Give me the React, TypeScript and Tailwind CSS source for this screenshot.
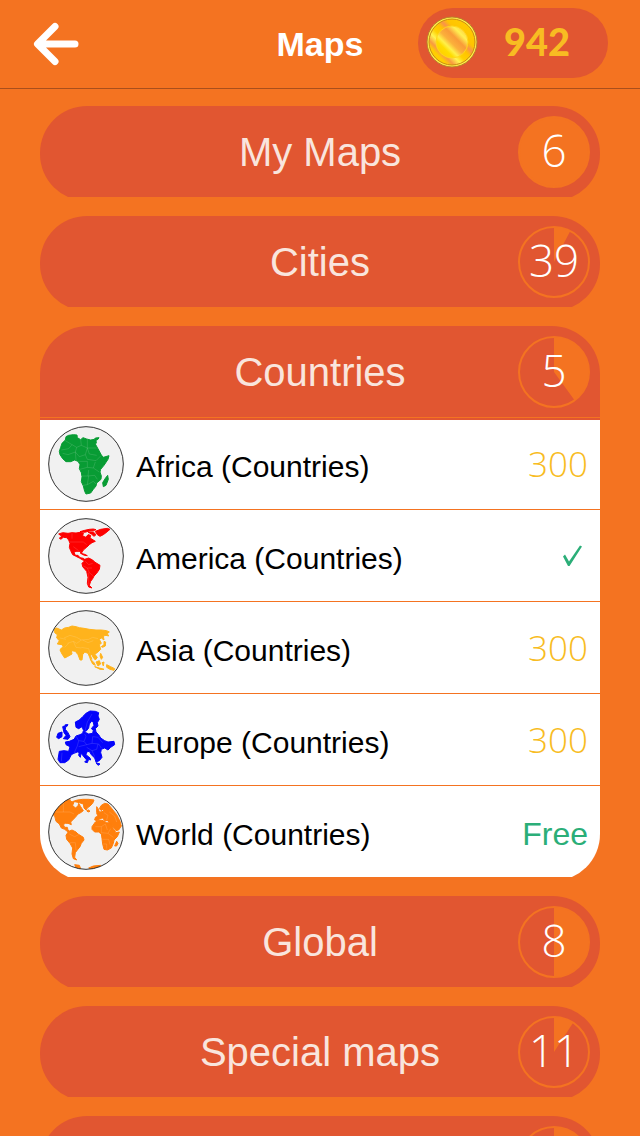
import type { ReactNode } from 'react'
import clsx from 'clsx'

type MapId = 'africa' | 'america' | 'asia' | 'europe' | 'world'

interface MapItem {
  id: MapId
  name: string
  price?: number
  owned?: boolean
}

interface Category {
  id: string
  title?: string
  count?: number
  progress: number
  maps?: MapItem[]
}

const CATEGORIES: Category[] = [
  { id: 'mine', title: 'My Maps', count: 6, progress: 1 },
  { id: 'cities', title: 'Cities', count: 39, progress: 0.077 },
  {
    id: 'countries',
    title: 'Countries',
    count: 5,
    progress: 0.4,
    maps: [
      { id: 'africa', name: 'Africa (Countries)', price: 300 },
      { id: 'america', name: 'America (Countries)', owned: true },
      { id: 'asia', name: 'Asia (Countries)', price: 300 },
      { id: 'europe', name: 'Europe (Countries)', price: 300 },
      { id: 'world', name: 'World (Countries)', price: 0 },
    ],
  },
  { id: 'global', title: 'Global', count: 8, progress: 0.5 },
  { id: 'special', title: 'Special maps', count: 11, progress: 0.092 },
  { id: 'more', progress: 0.5 },
]

const THUMBS: Record<MapId, { color: string; land: string; borders: string }> = {
  africa: {
    color: '#089c34',
    land: 'M54 32 62 28 76 26 87 27 88 35 98 41 105 35 116 39 128 42 139 40 142 36 153 35 150 40 144 43 145 51 142 54 152 72 160 87 166 94 183 89 180 100 168 118 158 130 156 138 160 150 159 160 146 171 144 180 136 190 128 201 114 204 110 196 106 180 100 167 102 152 100 140 94 128 96 116 90 106 80 102 68 107 54 107 44 98 36 86 34 76 38 64 42 52 52 42Z M179 148 181 160 174 178 166 182 164 170 172 157Z',
    borders: 'M52 44 72 56 86 64 100 58 98 41 M72 56 62 68 40 72 M86 64 82 78 60 86 44 82 M82 78 84 102 M100 58 118 66 112 86 94 92 82 78 M118 40V66L146 66 M118 66 124 84 146 88 M112 86 118 100 144 104 158 90 M94 106 118 106V124L96 130 M118 124 136 126 142 108 M136 126 154 138 M102 150 120 150 122 132 M120 150 140 148 148 160 M122 150 118 176 104 178 M118 176 136 166 144 174',
  },
  america: {
    color: '#fd0000',
    land: 'M32 48 44 44 60 46 72 44 84 45 96 43 106 45 104 54 114 58 120 50 128 52 126 60 136 66 142 70 132 74 124 80 116 88 108 94 102 102 100 108 96 100 84 100 78 103 82 112 90 112 96 119 106 121 112 126 106 127 94 120 82 114 74 110 68 98 64 88 66 76 62 66 56 59 46 58 38 64 34 60 42 55Z M142 40 158 34 178 31 186 34 174 44 166 50 156 55 148 50Z M96 41 110 37 124 34 136 33 144 35 136 38 124 39 110 43Z M120 42 136 42 144 50 138 55 130 48Z M98 106 110 109 118 113 109 112Z M110 124 122 120 134 126 140 132 156 142 154 154 146 166 138 174 134 182 128 190 124 202 132 210 122 207 118 196 120 178 116 160 104 146 102 136 108 130Z',
    borders: 'M66 72H106L116 80 M72 46V62 M112 130 122 140 134 136 M106 144 118 150 124 164 136 174 M118 150 132 150 M122 164 122 200 M76 86 92 98',
  },
  asia: {
    color: '#ffb31c',
    land: 'M20 56 26 54 40 60 50 54 62 52 72 48 84 50 94 53 108 55 124 58 144 60 160 60 176 62 184 66 178 71 182 78 174 76 166 78 168 90 160 84 154 88 160 100 154 104 158 118 148 128 140 132 148 142 142 150 134 140 132 134 126 134 132 148 126 144 120 130 110 126 104 134 102 150 96 150 90 134 82 124 70 122 72 132 58 140 50 144 42 132 36 120 40 114 46 112 42 104 28 102 34 92 26 84 28 74 20 68Z M168 94 173 96 172 108 164 112 160 110 168 104Z M126 146 138 158 142 166 134 162Z M144 156 154 152 158 162 150 168Z M162 158 168 156 166 168Z M158 130 164 142 160 148 156 138Z M176 164 188 170 200 176 198 181 186 178 176 172Z M140 170 154 174 168 178 156 178Z',
    borders: 'M48 84 66 76 86 82 100 90 122 88 134 82 150 86 M58 100 76 94 86 100 100 90 M76 94 84 112 100 114 M100 112 122 116 126 130 M50 112 62 100 M104 90 120 98 136 92 M36 84 54 88',
  },
  europe: {
    color: '#0404fb',
    land: 'M82 60 94 54 104 44 114 34 126 27 142 28 152 32 150 42 154 52 148 62 150 72 142 80 144 90 152 98 158 108 170 116 180 120 198 118 200 128 188 136 180 144 170 138 160 142 158 152 162 166 154 176 144 180 140 168 130 158 124 148 116 150 114 158 126 168 128 174 122 172 118 182 110 180 116 174 104 160 98 152 88 150 78 154 70 158 62 174 50 182 36 182 30 172 34 148 48 146 62 148 66 134 54 128 52 120 64 118 78 112 84 102 96 98 104 94 106 86 114 92 122 96 134 94 136 84 130 80 138 70 136 62 132 56 124 66 122 78 114 88 106 84 102 74 92 80 84 76Z M44 74 54 70 52 82 60 92 66 104 60 112 46 110 54 100 48 92Z M30 94 42 90 42 104 32 110 26 106Z M94 150 99 154 97 166 92 160Z M144 182 156 186 150 190Z M52 68 60 68 56 74Z',
    borders: 'M84 102 92 116 88 132 78 154 M92 116 108 118 114 104 110 96 M108 118 116 128 132 124 134 104 M92 134 116 128 M132 124 152 126 160 138 M134 104 152 106 M116 136 132 146 146 142 150 126 M132 146 140 164 M42 152 40 178 M112 84 118 60 132 36 M152 108 164 122',
  },
  world: {
    color: '#ff7f0c',
    land: 'M10 40 24 26 40 18 54 26 66 22 78 24 74 34 82 42 90 36 92 28 98 38 106 50 98 56 90 60 82 70 74 78 68 84 70 92 60 88 52 88 46 92 50 100 58 100 60 108 66 114 60 114 50 106 40 102 34 90 24 82 20 66 10 58Z M76 22 88 18 104 16 122 16 138 18 134 28 126 36 118 42 114 48 108 42 106 30 94 26Z M44 20 56 16 68 18 62 24 48 24Z M62 112 72 108 84 114 90 120 106 130 108 138 100 148 96 158 88 168 82 176 80 190 86 198 76 194 72 180 74 162 66 148 56 136 54 124Z M116 50 122 48 126 52 120 54Z M146 38 150 44 154 54 146 56Z M154 44 160 34 170 28 180 30 190 42 206 62 216 82 220 96 212 108 204 110 192 94 184 88 180 80 170 80 164 72 156 74 148 80 140 78 142 70 150 66 146 58 156 54 166 52 166 44 160 50Z M142 84 156 78 166 80 176 86 190 88 196 104 204 116 214 114 208 128 198 138 196 148 190 162 178 168 168 166 164 150 162 134 160 120 152 114 140 114 132 106 132 98Z M206 142 210 148 206 156 200 156Z M80 212 94 214 98 224 86 224Z M122 222 136 216 158 214 154 222 134 228Z',
    borders: 'M22 54H66L78 60 M46 24V54 M64 120 80 128 92 122 M66 146 82 146 84 168 M142 98 160 98 172 90 M160 98V116L180 118 188 104 M164 136 182 136 186 152 M180 118 196 130 M172 90 178 108 M168 56 180 64 176 78 M184 54 200 66 206 84 M164 150H176V164',
  },
}

function Thumb({ id }: { id: MapId }) {
  const { color, land, borders } = THUMBS[id]
  return (
    <svg className="size-[76px] shrink-0" viewBox="0 0 228 228" aria-hidden="true">
      <clipPath id={`clip-${id}`}>
        <circle cx="114" cy="114" r="112" />
      </clipPath>
      <circle cx="114" cy="114" r="112" fill="#f1f1f1" />
      <g clipPath={`url(#clip-${id})`}>
        <path d={land} fill={color} stroke={color} strokeWidth="3" strokeLinejoin="round" />
        <path d={borders} fill="none" stroke="#fff" strokeOpacity=".2" strokeWidth="2" />
      </g>
      <circle cx="114" cy="114" r="112" fill="none" stroke="#333" strokeWidth="3" />
    </svg>
  )
}

function Pie({ value }: { value: number }) {
  const a = value * Math.PI * 2
  const x = 36 + 35 * Math.sin(a)
  const y = 36 - 35 * Math.cos(a)
  return (
    <svg className="col-start-1 row-start-1 size-[72px]" viewBox="0 0 72 72" aria-hidden="true">
      <circle cx="36" cy="36" r="35" fill={value >= 1 ? '#f47321' : 'none'} stroke="#f47321" strokeWidth="2" />
      {value < 1 && <path d={`M36 36V1A35 35 0 ${value > 0.5 ? 1 : 0} 1 ${x} ${y}Z`} fill="#f47321" />}
    </svg>
  )
}

function Coin() {
  return (
    <svg className="mb-0.5 size-[52px]" viewBox="0 0 52 52" aria-hidden="true">
      <defs>
        <linearGradient id="rim" x1="0" y1="1" x2="1" y2="0">
          <stop offset="0" stopColor="#ffc800" />
          <stop offset=".2" stopColor="#ffcf00" />
          <stop offset=".27" stopColor="#f99a40" />
          <stop offset=".36" stopColor="#fff450" />
          <stop offset=".44" stopColor="#ffd000" />
          <stop offset=".54" stopColor="#ffc400" />
          <stop offset=".61" stopColor="#f9934a" />
          <stop offset=".68" stopColor="#ffc400" />
          <stop offset="1" stopColor="#ffd000" />
        </linearGradient>
        <linearGradient id="face" x1="0" y1="1" x2="1" y2="0">
          <stop offset="0" stopColor="#ffc400" />
          <stop offset=".28" stopColor="#ffdc00" />
          <stop offset=".37" stopColor="#fff04a" />
          <stop offset=".48" stopColor="#fbb03b" />
          <stop offset=".62" stopColor="#f99b38" />
          <stop offset=".76" stopColor="#fff052" />
          <stop offset="1" stopColor="#ffb52e" />
        </linearGradient>
      </defs>
      <circle cx="26" cy="26" r="25" fill="#fff04a" stroke="#b9822a" />
      <circle cx="26" cy="26" r="23" fill="url(#rim)" stroke="#c98a12" />
      <circle cx="26" cy="26" r="16" fill="url(#face)" stroke="#ffd51e" />
    </svg>
  )
}

function Price({ item }: { item: MapItem }) {
  if (item.owned) {
    return (
      <svg className="mr-1 size-6" viewBox="0 0 24 24" role="img" aria-label="Owned">
        <path d="M3 12.500 5 10.500 9 17.500 20 1.500 22 2.500 9.500 22H8Z" fill="#2bae78" />
      </svg>
    )
  }
  if (item.price === 0) return <span className="pt-1 text-[32px] leading-10 text-[#2bae78]">Free</span>
  return <span className="font-['Open_Sans',sans-serif] text-[35px] leading-10 font-light text-[#f8bc22]">{item.price}</span>
}

function CategoryHeader({ category, open }: { category: Category; open: boolean }) {
  const { title, count, progress } = category
  return (
    // The pill runs 4px past its box, so the lower edge is cut flat
    <div className="h-[91px] overflow-hidden">
      <button
        aria-expanded={open}
        className={clsx(
          'grid w-full grid-cols-[72px_1fr_72px] items-start bg-[#e15631] px-2.5 pt-2.5',
          open ? 'h-[91px] rounded-t-[48px]' : 'h-[95px] rounded-[47px]',
        )}
      >
        <span className="col-start-2 pt-3 text-center text-[40px] leading-12 text-[#f9e5dd]">{title}</span>
        <span className="col-start-3 grid place-items-center">
          <Pie value={progress} />
          <span className="col-start-1 row-start-1 pb-1 font-['Open_Sans',sans-serif] text-[44px] leading-[68px] font-light text-white">
            {count}
          </span>
        </span>
      </button>
    </div>
  )
}

function MapRow({ item }: { item: MapItem }) {
  return (
    <li className="border-b border-[#f47321] last:border-b-0">
      <button className="flex h-[91px] w-full items-center gap-3 pr-3 pl-2 text-left">
        <Thumb id={item.id} />
        <span className="flex-1 pt-1.5 text-[30px] leading-10 text-black">{item.name}</span>
        <Price item={item} />
      </button>
    </li>
  )
}

function Section({ category }: { category: Category }) {
  const { maps } = category
  return (
    <section className="shrink-0 overflow-hidden">
      <CategoryHeader category={category} open={!!maps} />
      {maps && (
        <ul className="mt-px -mb-1 overflow-hidden rounded-b-[47px] bg-white bg-linear-to-b from-[#e15631] from-[2px] to-white to-[2px] pb-1">
          {maps.map(m => <MapRow key={m.id} item={m} />)}
        </ul>
      )}
    </section>
  )
}

function Screen({ children }: { children: ReactNode }) {
  return (
    <div className="flex h-screen flex-col overflow-hidden bg-[#f47321] font-['Liberation_Sans',Arial,sans-serif]">
      {children}
    </div>
  )
}

export default function App() {
  return (
    <Screen>
      <header className="grid h-[89px] shrink-0 grid-cols-[1fr_auto_1fr] items-center border-b border-[#a94f1c] px-8">
        <button aria-label="Back" className="justify-self-start">
          <svg className="h-11 w-12" viewBox="0 0 48 44" fill="none" stroke="#fff" strokeWidth="7" strokeLinecap="round" strokeLinejoin="round">
            <path d="M23 4.500 5.500 22 23 39.500M7 22H43" />
          </svg>
        </button>
        <h1 className="text-[34px] leading-10 font-bold text-white">Maps</h1>
        <div className="mb-0.5 flex h-[70px] w-[190px] items-center justify-between justify-self-end rounded-full bg-[#e15631] pr-[38px] pl-2">
          <Coin />
          <span className="pb-1 font-[Lato,sans-serif] text-[38px] leading-10 font-black text-[#f8bc22]">942</span>
        </div>
      </header>

      <main className="flex flex-1 flex-col gap-[19px] overflow-hidden px-10 pt-[17px]">
        {CATEGORIES.map(c => <Section key={c.id} category={c} />)}
      </main>
    </Screen>
  )
}
